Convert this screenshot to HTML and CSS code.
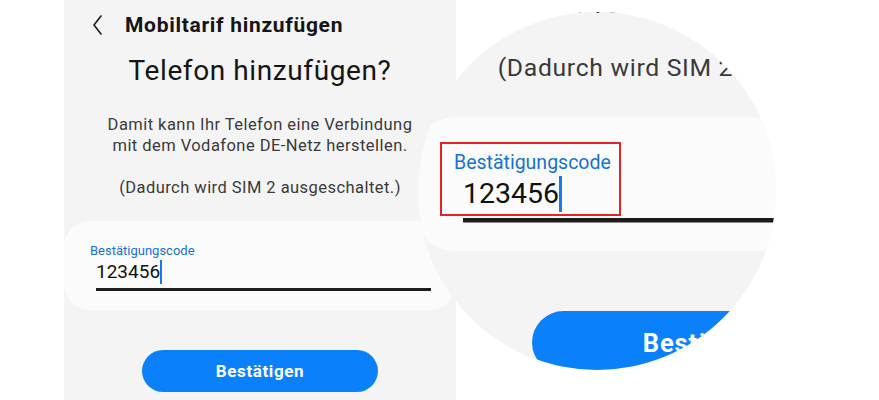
FILE: index.html
```html
<!DOCTYPE html>
<html lang="de">
<head>
  <meta charset="UTF-8">
  <meta name="viewport" content="width=device-width, initial-scale=1.0">
  <title>Mobiltarif hinzufügen</title>
  <link rel="stylesheet" href="styles.css">
</head>
<body>

  <div class="stage">
    <div class="phone">
      <div class="topbar">
        <svg class="back" width="12" height="20" viewBox="0 0 12 20">
          <path d="M10 1 L3 10 L10 19" fill="none" stroke="#1b1b1b" stroke-width="1.6" stroke-linecap="round" stroke-linejoin="round"/>
        </svg>
        <span class="topbar-title">Mobiltarif hinzufügen</span>
      </div>

      <h1 class="question">Telefon hinzufügen?</h1>

      <p class="info">Damit kann Ihr Telefon eine Verbindung<br>mit dem Vodafone DE-Netz herstellen.</p>
      <p class="info info-sim">(Dadurch wird SIM 2 ausgeschaltet.)</p>

      <div class="code-card">
        <label class="code-label">Bestätigungscode</label>
        <div class="code-field"><span class="code-value">123456</span><span class="caret"></span></div>
      </div>

      <div class="actions">
        <button class="confirm">Bestätigen</button>
      </div>
    </div>

    <!-- Lupe: gleiche Ansicht, 1,5-fach vergrößert -->
    <div class="magnifier" aria-hidden="true">
      <div class="phone">
        <div class="topbar">
          <svg class="back" width="12" height="20" viewBox="0 0 12 20">
            <path d="M10 1 L3 10 L10 19" fill="none" stroke="#1b1b1b" stroke-width="1.6" stroke-linecap="round" stroke-linejoin="round"/>
          </svg>
          <span class="topbar-title">Mobiltarif hinzufügen</span>
        </div>

        <h1 class="question">Telefon hinzufügen?</h1>

        <p class="info">Damit kann Ihr Telefon eine Verbindung<br>mit dem Vodafone DE-Netz herstellen.</p>
        <p class="info info-sim">(Dadurch wird SIM 2 ausgeschaltet.)</p>

        <div class="code-card">
          <label class="code-label">Bestätigungscode</label>
          <div class="code-field"><span class="code-value">123456</span><span class="caret"></span></div>
        </div>

        <div class="actions">
          <button class="confirm">Bestätigen</button>
        </div>
      </div>
      <div class="focus-frame"></div>
    </div>
  </div>

</body>
</html>
```

FILE: styles.css
```css
:root {
  --grau: #f4f4f4;
  --karte: #fbfbfb;
  --blau: #0a80fb;
  --blau-text: #1672d4;
  --text: #3a3a3a;
}

body {
  margin: 0;
  background: #fff;
  font-family: Roboto, "Noto Sans", sans-serif;
}

.stage {
  position: relative;
  width: 879px;
  height: 400px;
  overflow: hidden;
}

.phone {
  margin-left: 64px;
  width: 392px;
  height: 400px;
  background: var(--grau);
  display: flex;
  flex-direction: column;
}

.topbar {
  display: flex;
  align-items: center;
  height: 24px;
  padding: 13px 0 0 27px;
}

.back {
  display: block;
}

.topbar-title {
  margin-left: 22px;
  font-size: 21px;
  line-height: 24px;
  font-weight: bold;
  letter-spacing: 0.7px;
  color: #151515;
}

.question {
  margin: 17px 0 0;
  font-size: 28px;
  line-height: 34px;
  font-weight: normal;
  letter-spacing: 0.6px;
  text-align: center;
  color: #151515;
}

.info {
  margin: 26px 0 0;
  font-size: 16.5px;
  line-height: 21px;
  letter-spacing: 0.45px;
  text-align: center;
  color: var(--text);
}

.info-sim {
  margin-top: 21px;
}

.code-card {
  margin-top: 23px;
  background: var(--karte);
  border-radius: 26px;
  padding: 22px 25px 19px 26px;
}

.code-label {
  display: block;
  font-size: 13px;
  line-height: 16px;
  color: var(--blau-text);
}

.code-field {
  display: flex;
  align-items: center;
  margin: 1px 0 0 6px;
  padding-bottom: 4px;
  border-bottom: 3px solid #1c1c1c;
}

.code-value {
  font-size: 19px;
  line-height: 24px;
  color: #111;
}

.caret {
  width: 2px;
  height: 24px;
  background: #1877f2;
}

.actions {
  display: flex;
  justify-content: center;
  margin-top: 40px;
}

.confirm {
  width: 236px;
  height: 42px;
  border: none;
  border-radius: 21px;
  background: var(--blau);
  color: #fff;
  font-family: inherit;
  font-size: 17px;
  font-weight: bold;
  letter-spacing: 0.6px;
}

.magnifier {
  position: absolute;
  left: 418px;
  top: 12px;
  width: 358px;
  height: 358px;
  border-radius: 50%;
  overflow: hidden;
  background: var(--grau);
}

.magnifier .phone {
  position: absolute;
  left: -3px;
  top: -226px;
  margin: 0;
  transform: scale(1.5);
  transform-origin: 0 0;
}

.focus-frame {
  position: absolute;
  left: 22px;
  top: 130px;
  width: 181px;
  height: 74px;
  border: 2px solid #e42326;
  box-sizing: border-box;
}
```
